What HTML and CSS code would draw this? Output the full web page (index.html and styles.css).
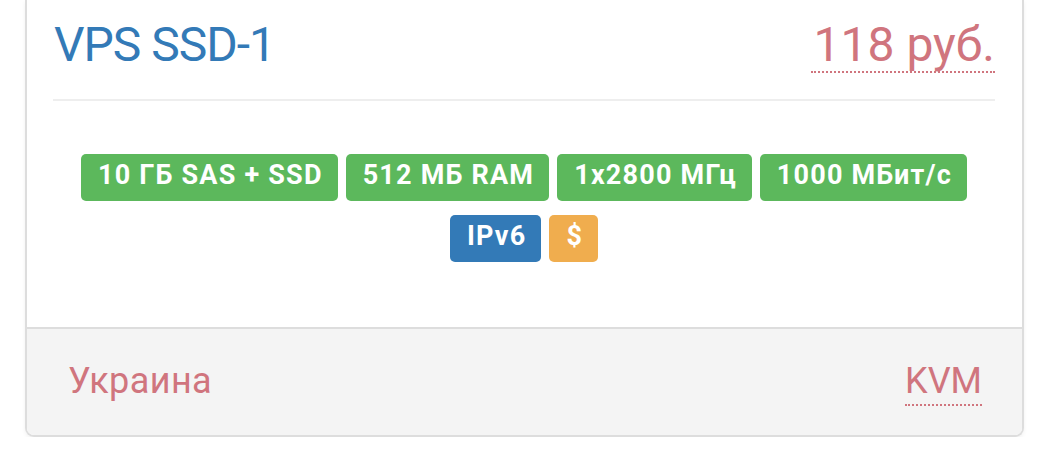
FILE: index.html
```html
<!DOCTYPE html>
<html lang="ru">
<head>
<meta charset="utf-8">
<title>VPS SSD-1</title>
<link rel="stylesheet" href="styles.css">
</head>
<body>
<div class="card">
  <div class="card-body">
    <div class="card-head">
      <span class="title">VPS SSD-1</span>
      <span class="price">118 руб.</span>
    </div>
    <hr class="divider">
    <div class="labels">
      <span class="label label-green">10 ГБ SAS + SSD</span>
      <span class="label label-green">512 МБ RAM</span>
      <span class="label label-green">1x2800 МГц</span>
      <span class="label label-green">1000 МБит/с</span>
      <span class="label label-blue">IPv6</span>
      <span class="label label-orange">$</span>
    </div>
  </div>
  <div class="card-foot">
    <span class="country">Украина</span>
    <span class="virt">KVM</span>
  </div>
</div>
</body>
</html>
```

FILE: styles.css
```css
html, body {
  margin: 0;
  padding: 0;
  background: #ffffff;
}

body {
  font-family: Roboto, "Noto Sans", "Liberation Sans", sans-serif;
}

.card {
  margin-left: 25px;
  width: 999px;
  box-sizing: border-box;
  border: 2px solid #dddddd;
  border-top: 0;
  border-radius: 0 0 9px 9px;
  box-shadow: 0 2px 4px rgba(0, 0, 0, 0.06);
  background: #ffffff;
  overflow: hidden;
}

.card-body {
  padding: 18px 27px 65px 26px;
}

.card-head {
  display: flex;
  justify-content: space-between;
  align-items: baseline;
  font-size: 48px;
  line-height: 53px;
}

.title {
  color: #337ab7;
  padding-left: 1px;
  letter-spacing: -1px;
}

.price {
  display: inline-block;
  color: #d0757e;
  border-bottom: 2px dotted #d0757e;
  padding-left: 3px;
}

.divider {
  margin: 26px 0 0 0;
  border: 0;
  height: 2px;
  background: #eeeeee;
}

.labels {
  margin-top: 53px;
  display: flex;
  flex-wrap: wrap;
  justify-content: center;
  gap: 14px 8px;
}

.label {
  display: inline-block;
  font-size: 27px;
  font-weight: 700;
  line-height: 27px;
  letter-spacing: 1.2px;
  padding: 8px 15px 12px 17px;
  color: #ffffff;
  border-radius: 5px;
  white-space: nowrap;
}

.label-green {
  background: #5cb85c;
}

.label-blue {
  background: #337ab7;
}

.label-orange {
  background: #f0ad4e;
}

.card-foot {
  display: flex;
  justify-content: space-between;
  align-items: flex-start;
  background: #f4f4f4;
  border-top: 2px solid #dddddd;
  padding: 29px 40px 29px 41px;
  font-size: 36px;
  line-height: 46px;
  color: #d0757e;
}

.country {
  letter-spacing: 0.4px;
}

.virt {
  display: inline-block;
  border-bottom: 2px dotted #d0757e;
}
```
